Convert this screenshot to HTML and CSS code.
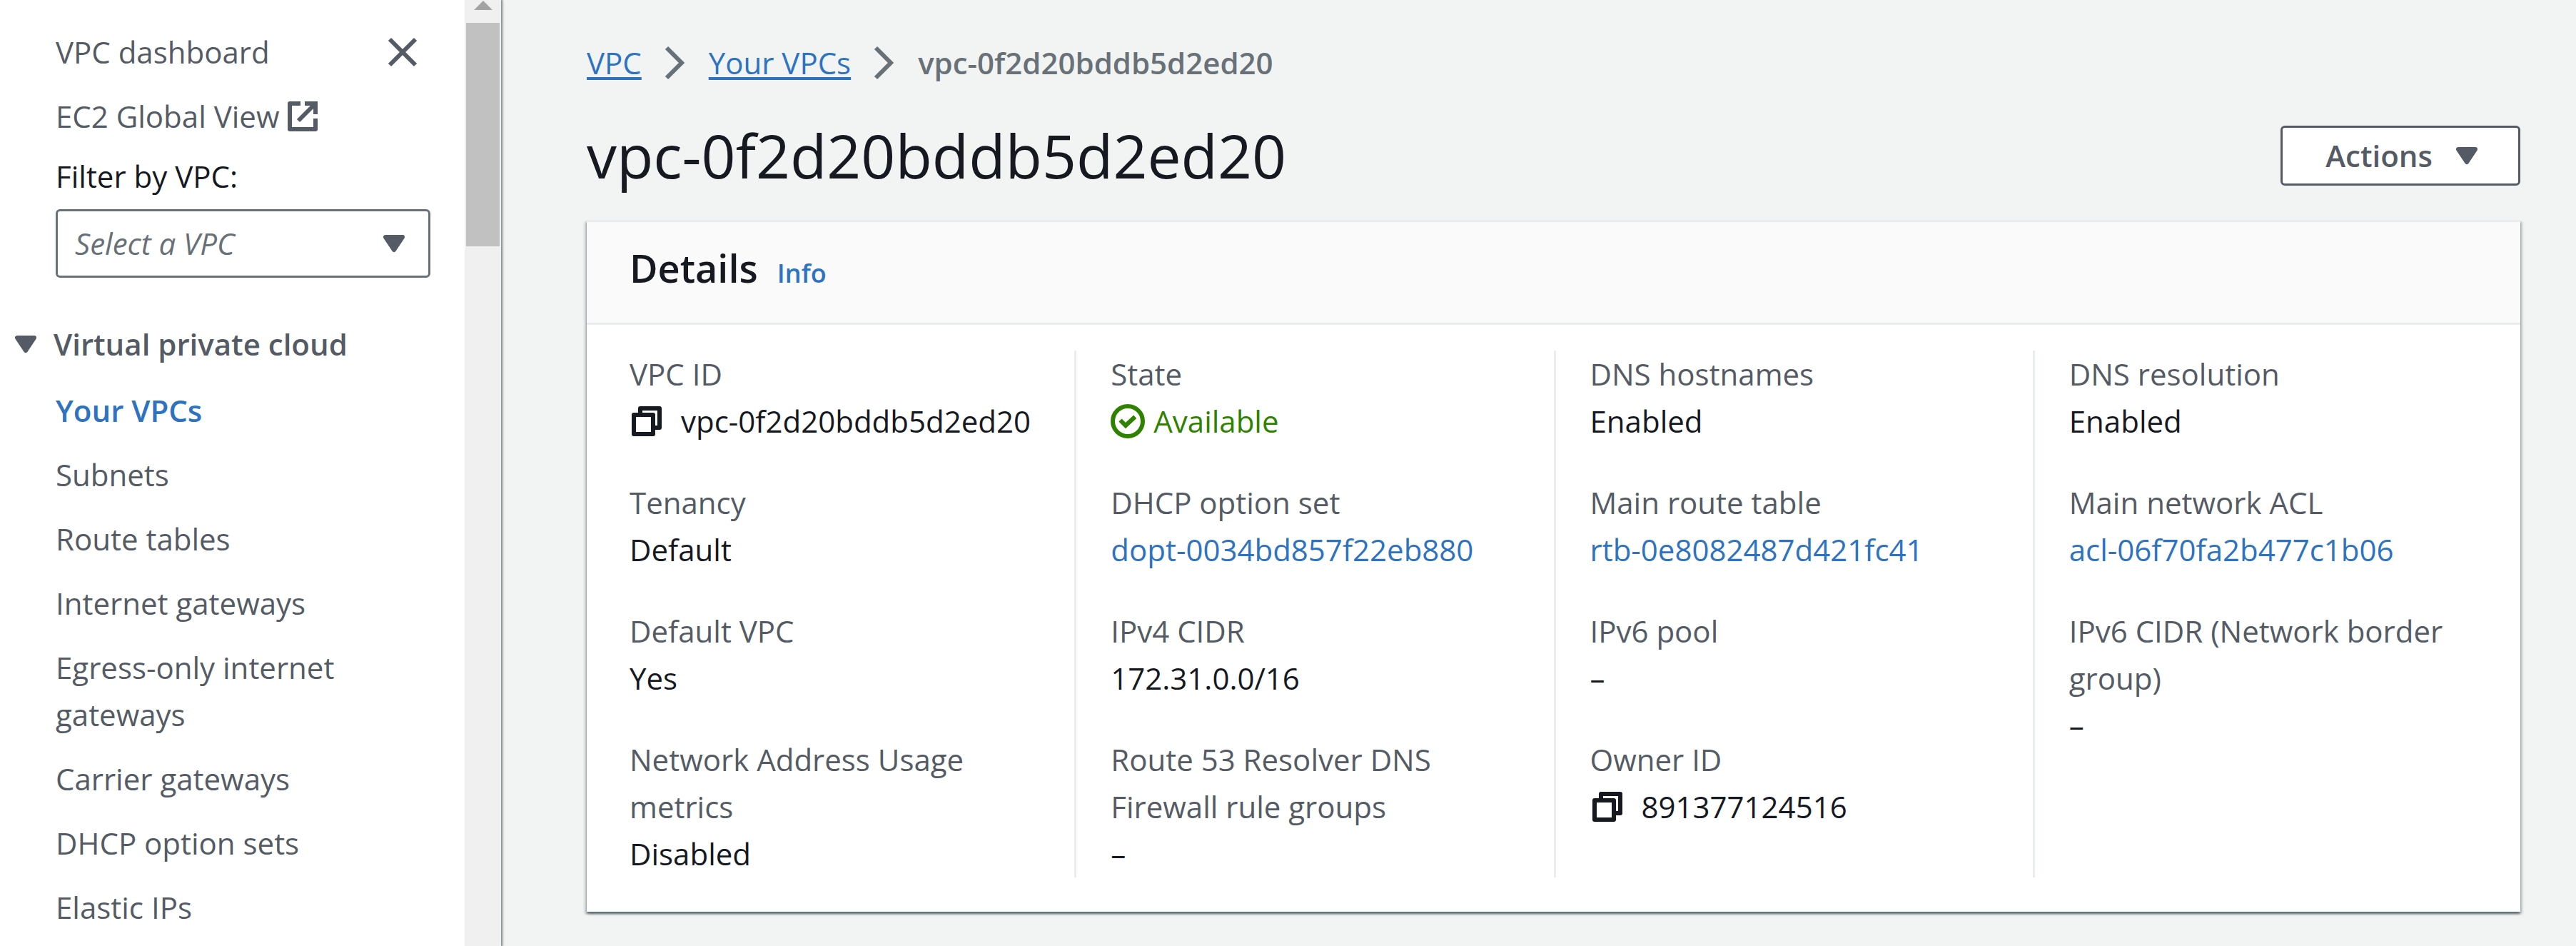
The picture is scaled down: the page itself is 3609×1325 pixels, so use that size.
FILE: index.html
```html
<!DOCTYPE html>
<html lang="en">
<head>
<meta charset="utf-8">
<title>vpc-0f2d20bddb5d2ed20 | VPC</title>
<link rel="stylesheet" href="styles.css">
</head>
<body>
<svg class="defs" aria-hidden="true">
  <symbol id="copy" viewBox="0 0 16 16"><path d="M2 5h9v9H2zM5 5V2h9v9h-3" fill="none" stroke="currentColor" stroke-width="2" stroke-linejoin="round"/></symbol>
  <symbol id="check" viewBox="0 0 16 16"><circle cx="8" cy="8" r="7" fill="none" stroke="currentColor" stroke-width="2"/><path d="M4.5 7.5L7 10l4.4-4.1" fill="none" stroke="currentColor" stroke-width="2"/></symbol>
  <symbol id="caret" viewBox="0 0 16 16"><path d="M4 5h8L8 11z" fill="currentColor" stroke="currentColor" stroke-width="2" stroke-linejoin="round"/></symbol>
  <symbol id="close" viewBox="0 0 16 16"><path d="M2 2l12 12M14 2L2 14" fill="none" stroke="currentColor" stroke-width="2"/></symbol>
  <symbol id="chevron" viewBox="0 0 16 16"><path d="M4 1l7 7-7 7" fill="none" stroke="currentColor" stroke-width="2"/></symbol>
  <symbol id="external" viewBox="0 0 16 16"><path d="M7 2H2v12h12V9" fill="none" stroke="currentColor" stroke-width="2" stroke-linejoin="round"/><path d="M9 2h5v5M14 2L6 10" fill="none" stroke="currentColor" stroke-width="2"/></symbol>
</svg>
<div class="app">
  <aside class="sidebar">
    <nav class="nav" aria-label="VPC">
      <div class="nav-top">
        <a class="nav-link" href="#">VPC dashboard</a>
        <button class="icon-button" type="button" aria-label="Close"><svg class="icon"><use href="#close"/></svg></button>
      </div>
      <a class="nav-link external" href="#">EC2 Global View <svg class="icon"><use href="#external"/></svg></a>
      <div class="filter">
        <label class="filter-label" for="vpc-filter">Filter by VPC:</label>
        <div class="select-wrap">
          <select class="select" id="vpc-filter"><option>Select a VPC</option></select>
          <svg class="icon select-caret"><use href="#caret"/></svg>
        </div>
      </div>
      <button class="section" type="button" aria-expanded="true"><svg class="icon"><use href="#caret"/></svg>Virtual private cloud</button>
      <ul class="nav-list">
        <li><a class="nav-link active" href="#">Your VPCs</a></li>
        <li><a class="nav-link" href="#">Subnets</a></li>
        <li><a class="nav-link" href="#">Route tables</a></li>
        <li><a class="nav-link" href="#">Internet gateways</a></li>
        <li><a class="nav-link" href="#">Egress-only internet gateways</a></li>
        <li><a class="nav-link" href="#">Carrier gateways</a></li>
        <li><a class="nav-link" href="#">DHCP option sets</a></li>
        <li><a class="nav-link" href="#">Elastic IPs</a></li>
      </ul>
    </nav>
    <div class="scrollbar" aria-hidden="true"><div class="scroll-arrow"></div><div class="scroll-thumb"></div></div>
  </aside>
  <main class="main">
    <nav class="breadcrumbs" aria-label="Breadcrumbs">
      <a href="#">VPC</a>
      <svg class="icon"><use href="#chevron"/></svg>
      <a href="#">Your VPCs</a>
      <svg class="icon"><use href="#chevron"/></svg>
      <span class="current">vpc-0f2d20bddb5d2ed20</span>
    </nav>
    <header class="page-header">
      <h1>vpc-0f2d20bddb5d2ed20</h1>
      <button class="button" type="button">Actions <svg class="icon"><use href="#caret"/></svg></button>
    </header>
    <section class="card">
      <header class="card-header"><h2>Details</h2><a class="info" href="#">Info</a></header>
      <div class="columns">
        <dl class="column">
          <div><dt>VPC ID</dt><dd class="with-icon"><svg class="icon"><use href="#copy"/></svg>vpc-0f2d20bddb5d2ed20</dd></div>
          <div><dt>Tenancy</dt><dd>Default</dd></div>
          <div><dt>Default VPC</dt><dd>Yes</dd></div>
          <div><dt>Network Address Usage metrics</dt><dd>Disabled</dd></div>
        </dl>
        <dl class="column">
          <div><dt>State</dt><dd class="with-icon status"><svg class="icon"><use href="#check"/></svg>Available</dd></div>
          <div><dt>DHCP option set</dt><dd><a href="#">dopt-0034bd857f22eb880</a></dd></div>
          <div><dt>IPv4 CIDR</dt><dd>172.31.0.0/16</dd></div>
          <div><dt>Route 53 Resolver DNS Firewall rule groups</dt><dd>–</dd></div>
        </dl>
        <dl class="column">
          <div><dt>DNS hostnames</dt><dd>Enabled</dd></div>
          <div><dt>Main route table</dt><dd><a href="#">rtb-0e8082487d421fc41</a></dd></div>
          <div><dt>IPv6 pool</dt><dd>–</dd></div>
          <div><dt>Owner ID</dt><dd class="with-icon"><svg class="icon"><use href="#copy"/></svg>891377124516</dd></div>
        </dl>
        <dl class="column">
          <div><dt>DNS resolution</dt><dd>Enabled</dd></div>
          <div><dt>Main network ACL</dt><dd><a href="#">acl-06f70fa2b477c1b06</a></dd></div>
          <div><dt>IPv6 CIDR (Network border group)</dt><dd>–</dd></div>
        </dl>
      </div>
    </section>
  </main>
</div>
</body>
</html>
```

FILE: styles.css
```css
* { box-sizing: border-box; }

body {
  margin: 0;
  background: #f2f4f3;
  color: #16191f;
  font: 42px/66px "Open Sans", "Noto Sans", sans-serif;
}

a { color: #2e73c0; text-decoration: none; }
button, select { font: inherit; color: inherit; }
ul, dl, dd, h1, h2 { margin: 0; padding: 0; }
ul { list-style: none; }

.defs { display: none; }
.icon { width: 48px; height: 48px; flex: none; }

.app { display: flex; min-height: 100vh; }

/* Side navigation */
.sidebar {
  display: flex;
  flex: none;
  width: 702px;
  background: #fff;
  box-shadow: 1px 0 3px 1px rgba(0, 28, 36, 0.5);
}

.nav { flex: 1; padding: 40px 48px 0 78px; }
.nav-link { display: block; color: #545b64; }
.nav-link.active { color: #2e73c0; font-weight: 600; }
.nav-top { display: flex; justify-content: space-between; align-items: center; margin-bottom: 24px; }

.icon-button {
  display: flex;
  margin-right: 15px;
  padding: 0;
  border: 0;
  background: none;
  color: #545b64;
}

.external { display: flex; align-items: center; gap: 9px; }
.filter { margin: 18px 0 60px; }
.filter-label { display: block; margin-bottom: 13px; }
.select-wrap { position: relative; }

.select {
  display: block;
  width: 100%;
  height: 96px;
  padding: 0 24px;
  appearance: none;
  border: 3px solid #687078;
  border-radius: 6px;
  background: #fff;
  color: #687078;
  font-style: italic;
}

.select-caret {
  position: absolute;
  top: 24px;
  right: 27px;
  color: #545b64;
  pointer-events: none;
}

.section {
  display: flex;
  align-items: center;
  gap: 15px;
  margin: 0 0 27px -66px;
  padding: 0;
  border: 0;
  background: none;
  color: #545b64;
  font-weight: 600;
}

.nav-list { display: flex; flex-direction: column; gap: 24px; }

.scrollbar {
  display: flex;
  flex-direction: column;
  align-items: center;
  width: 51px;
  background: #f0f0f0;
}

.scroll-arrow {
  margin: 1px 0 18px;
  border: 13px solid transparent;
  border-top: 0;
  border-bottom-color: #a3a3a3;
}

.scroll-thumb { width: 47px; height: 313px; background: #c1c1c1; }

/* Page content */
.main { flex: 1; padding: 55px 78px 48px 120px; }

.breadcrumbs { display: flex; align-items: center; gap: 23px; color: #687078; }
.breadcrumbs a { text-decoration: underline; text-decoration-thickness: 4px; text-underline-offset: 4px; }
.breadcrumbs .current { font-weight: 600; }

.page-header { display: flex; justify-content: space-between; align-items: center; margin: 43px 0 36px; }
h1 { font-size: 84px; line-height: 108px; font-weight: 400; }

.button {
  display: flex;
  align-items: center;
  gap: 24px;
  height: 84px;
  padding: 0 48px 0 60px;
  border: 3px solid #545b64;
  border-radius: 6px;
  background: #fff;
  color: #545b64;
  font-weight: 600;
}

.card {
  border-top: 3px solid #eaeded;
  background: #fff;
  box-shadow: 0 3px 3px rgba(0, 28, 36, 0.5), 3px 3px 3px rgba(0, 28, 36, 0.15), -3px 3px 3px rgba(0, 28, 36, 0.15);
}

.card-header {
  display: flex;
  align-items: baseline;
  gap: 27px;
  padding: 31px 60px 44px;
  border-bottom: 3px solid #eaeded;
  background: #fafafa;
}

h2 { font-size: 54px; line-height: 66px; font-weight: 600; }
.info { font-size: 36px; line-height: 48px; font-weight: 600; }

.columns { display: grid; grid-template-columns: repeat(4, 1fr); padding: 36px 12px 48px; }
.column { display: flex; flex-direction: column; gap: 48px; padding: 0 48px; }
.column + .column { border-left: 3px solid #eaeded; }
dt { color: #545b64; }
.with-icon { display: flex; align-items: center; gap: 24px; }
.status { gap: 12px; color: #2f8200; }
```
